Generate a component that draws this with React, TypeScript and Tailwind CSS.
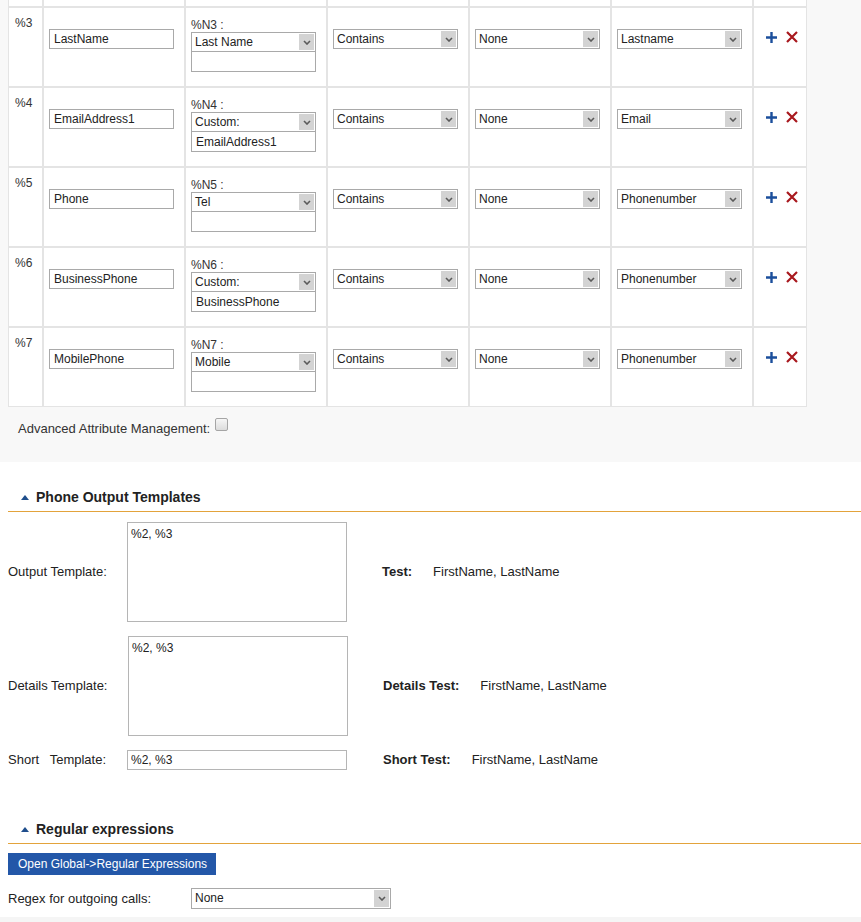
import React from 'react'

// Zeilen der Feldzuordnung (die erste ist oben abgeschnitten).
const ROWS = [
  { id: '%3', field: 'LastName', n: '%N3 :', map: 'Last Name', custom: '', type: 'Lastname' },
  { id: '%4', field: 'EmailAddress1', n: '%N4 :', map: 'Custom:', custom: 'EmailAddress1', type: 'Email' },
  { id: '%5', field: 'Phone', n: '%N5 :', map: 'Tel', custom: '', type: 'Phonenumber' },
  { id: '%6', field: 'BusinessPhone', n: '%N6 :', map: 'Custom:', custom: 'BusinessPhone', type: 'Phonenumber' },
  { id: '%7', field: 'MobilePhone', n: '%N7 :', map: 'Mobile', custom: '', type: 'Phonenumber' },
]

function Select({ value, width = 'w-[125px]', height = 'h-[20px]' }: { value: string; width?: string; height?: string }) {
  return (
    <div className={`flex ${width} ${height} border border-[#a9a9a9] bg-white`}>
      <span className="flex-1 truncate pl-[3px] text-[12px] leading-[18px] text-[#222]">{value}</span>
      <span className="flex w-[17px] items-center justify-center border border-white bg-[#d3d3d3]">
        <svg width="8" height="5" viewBox="0 0 8 5">
          <path d="M1 1 L4 4 L7 1" fill="none" stroke="#5a5a5a" strokeWidth="1.6" />
        </svg>
      </span>
    </div>
  )
}

function TextBox({ value, className = '' }: { value: string; className?: string }) {
  return (
    <input
      readOnly
      value={value}
      className={`block h-[20px] w-[125px] border border-[#a9a9a9] bg-white pl-[4px] text-[12px] text-[#222] outline-none ${className}`}
    />
  )
}

function SectionHeader({ title }: { title: string }) {
  return (
    <div className="ml-[8px] flex items-center gap-[7px] border-b border-[#e3a33b] pb-[6px] pl-[13px]">
      <svg width="8" height="5" viewBox="0 0 8 5">
        <path d="M0 5 L4 0 L8 5 Z" fill="#1f4e8c" />
      </svg>
      <span className="text-[14px] font-bold leading-[16px] text-[#222]">{title}</span>
    </div>
  )
}

function Cell({ children, className = '' }: { children?: React.ReactNode; className?: string }) {
  return <div className={`bg-white ${className}`}>{children}</div>
}

export default function App() {
  return (
    <div className="min-h-[922px] bg-white text-[#222]" style={{ fontFamily: '"Liberation Sans", Arial, sans-serif' }}>
      {/* Attribut-Tabelle */}
      <div className="h-[462px] bg-[#f8f8f8] pl-[8px]">
        <div className="grid w-fit grid-cols-[33px_140px_140px_140px_140px_140px_52px] gap-[2px] bg-[#e4e4e4] px-[1px] pb-[1px]">
          {Array.from({ length: 7 }).map((_, i) => (
            <Cell key={`stub-${i}`} className="h-[6px]" />
          ))}
          {ROWS.map((r) => (
            <React.Fragment key={r.id}>
              <Cell className="h-[78px] pl-[6px] pt-[8px] text-[12px] leading-[14px] text-[#333]">{r.id}</Cell>
              <Cell className="pl-[5px] pt-[21px]">
                <TextBox value={r.field} />
              </Cell>
              <Cell className="pl-[5px] pt-[10px]">
                <div className="text-[12px] leading-[14px] text-[#333]">{r.n}</div>
                <Select value={r.map} />
                <TextBox value={r.custom} className="border-t-0" />
              </Cell>
              <Cell className="pl-[5px] pt-[21px]">
                <Select value="Contains" />
              </Cell>
              <Cell className="pl-[5px] pt-[21px]">
                <Select value="None" />
              </Cell>
              <Cell className="pl-[5px] pt-[21px]">
                <Select value={r.type} />
              </Cell>
              <Cell className="flex items-start gap-[9px] pl-[12px] pt-[24px]">
                <svg width="11" height="11" viewBox="0 0 11 11">
                  <path d="M5.5 0 V11 M0 5.5 H11" stroke="#1b4f9c" strokeWidth="2.4" />
                </svg>
                <svg width="12" height="12" viewBox="0 0 12 12" className="-mt-[1px]">
                  <path d="M1 1 L11 11 M11 1 L1 11" stroke="#a8181e" strokeWidth="2.2" />
                </svg>
              </Cell>
            </React.Fragment>
          ))}
        </div>
        <div className="mt-[14px] flex items-start gap-[5px] pl-[10px]">
          <span className="text-[13px] leading-[16px] text-[#333]">Advanced Attribute Management:</span>
          <span className="-mt-[3px] block h-[13px] w-[13px] rounded-[2px] border border-[#a5a5a5] bg-gradient-to-b from-[#f6f6f6] to-[#dcdcdc]" />
        </div>
      </div>

      {/* Ausgabevorlagen */}
      <div className="mt-[27px]">
        <SectionHeader title="Phone Output Templates" />
        <div className="pl-[8px] text-[13px]">
          <div className="mt-[10px] flex items-center">
            <span className="w-[119px]">Output Template:</span>
            <textarea
              readOnly
              value="%2, %3"
              className="h-[100px] w-[220px] resize-none border border-[#b5b5b5] px-[3px] py-[2px] text-[12px] text-[#222] outline-none"
            />
            <span className="ml-[35px] font-bold">Test:</span>
            <span className="ml-[21px]">FirstName, LastName</span>
          </div>
          <div className="mt-[14px] flex items-center">
            <span className="w-[120px]">Details Template:</span>
            <textarea
              readOnly
              value="%2, %3"
              className="h-[100px] w-[220px] resize-none border border-[#b5b5b5] px-[3px] py-[2px] text-[12px] text-[#222] outline-none"
            />
            <span className="ml-[35px] font-bold">Details Test:</span>
            <span className="ml-[21px]">FirstName, LastName</span>
          </div>
          <div className="mt-[14px] flex items-center">
            <span className="w-[119px] whitespace-pre">{'Short   Template:'}</span>
            <input
              readOnly
              value="%2, %3"
              className="h-[20px] w-[220px] border border-[#b5b5b5] pl-[3px] text-[12px] text-[#222] outline-none"
            />
            <span className="ml-[36px] font-bold">Short Test:</span>
            <span className="ml-[21px]">FirstName, LastName</span>
          </div>
        </div>
      </div>

      {/* Reguläre Ausdrücke */}
      <div className="mt-[51px]">
        <SectionHeader title="Regular expressions" />
        <div className="pl-[8px]">
          <button
            type="button"
            className="mt-[9px] h-[22px] w-[208px] bg-[#2357a8] pl-[10px] text-left text-[12px] text-white"
          >
            Open Global-&gt;Regular Expressions
          </button>
          <div className="mt-[13px] flex items-center">
            <span className="w-[183px] text-[13px]">Regex for outgoing calls:</span>
            <Select value="None" width="w-[200px]" height="h-[21px]" />
          </div>
        </div>
        <div className="mt-[8px] h-[10px] bg-[#f5f5f5]" />
      </div>
    </div>
  )
}
